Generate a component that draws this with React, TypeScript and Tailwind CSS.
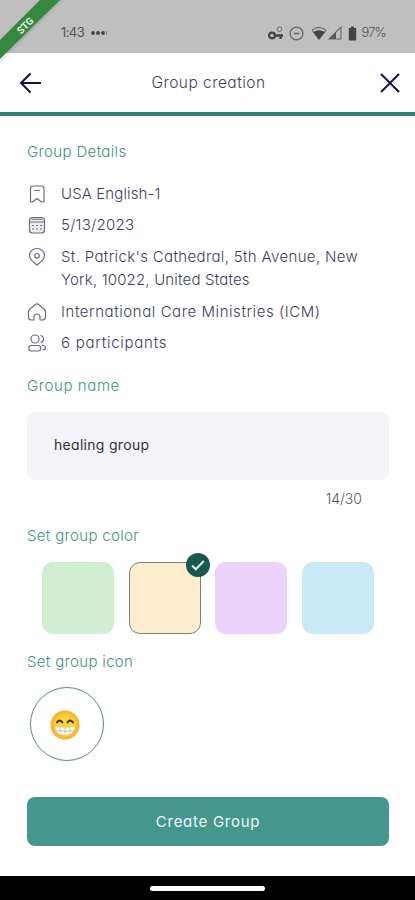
import type { ReactNode } from "react";

type DetailRowProps = {
  icon: ReactNode;
  children: ReactNode;
  className?: string;
};

const SWATCHES = [
  { name: "Green", fill: "bg-[#d0eed2]", selected: false },
  { name: "Yellow", fill: "bg-[#fdedcf]", selected: true },
  { name: "Purple", fill: "bg-[#ebd3fb]", selected: false },
  { name: "Blue", fill: "bg-[#c9ebf8]", selected: false },
];

function StatusBar() {
  return (
    <div className="relative flex h-[53px] shrink-0 items-start justify-between bg-[#bfbfbf] pr-[29px] pl-[61px] pt-[23px] text-[#555]">
      <div className="flex h-5 items-center">
        <span className="text-[13px] tracking-[-0.6px]">1:43</span>
        <svg className="ml-1.5 h-2 w-[18px]" viewBox="0 0 18 8" fill="#444">
          <circle cx="3" cy="4" r="1.9" />
          <circle cx="8" cy="4" r="1.9" />
          <circle cx="13" cy="4" r="1.9" />
          <path d="M16 2h.8v4H16z" opacity=".6" />
        </svg>
      </div>
      <div className="flex h-5 items-center">
        <svg className="h-4 w-4" viewBox="0 0 16 16" fill="none" stroke="#444">
          <circle cx="4" cy="10.5" r="2.9" strokeWidth="2.2" />
          <path d="M7 10.5h8M12.6 10.5V14" strokeWidth="2.4" />
          <circle cx="11.5" cy="4.2" r="2.3" strokeWidth="1" opacity=".7" />
        </svg>
        <svg className="ml-[5px] h-[15px] w-[15px]" viewBox="0 0 15 15" fill="none" stroke="#666">
          <circle cx="7.5" cy="7.5" r="6.4" strokeWidth="1.3" />
          <path d="M4.8 7.5h5.4" strokeWidth="1.6" />
        </svg>
        <svg className="ml-[7px] h-[15px] w-4" viewBox="0 0 16 15">
          <path d="M1 4.2Q8-1.2 15 4.2L8 13.5Z" fill="none" stroke="#555" strokeWidth="1" />
          <path d="M2.4 6Q8 2.6 13.6 6L8 13.5Z" fill="#444" />
        </svg>
        <svg className="ml-px h-[14px] w-[14px]" viewBox="0 0 14 14">
          <path d="M13 1v12H1Z" fill="none" stroke="#666" strokeWidth="1.1" />
          <path d="M8 6v7H1Z" fill="#555" />
        </svg>
        <svg className="ml-[6px] h-[15px] w-[9px]" viewBox="0 0 9 15" fill="#444">
          <path d="M3 .5h3V2h2.2v12.5H.8V2H3Z" />
        </svg>
        <span className="ml-1 text-[13px] font-light tracking-[-0.8px]">97%</span>
      </div>

      {/* corner ribbon */}
      <svg className="absolute top-0 left-0 h-16 w-16" viewBox="0 0 64 64">
        <path d="M40 0H63L0 63V40Z" fill="#000" opacity=".08" />
        <path d="M40 0H60L0 59V40Z" fill="#36883e" />
        <text
          x="25.5"
          y="29"
          textAnchor="middle"
          transform="rotate(-45 25.5 26)"
          fill="#e4f2e5"
          className="font-['Roboto',sans-serif] text-[10px] font-bold"
        >
          STG
        </text>
      </svg>
    </div>
  );
}

function Header() {
  return (
    <header className="flex h-[63px] shrink-0 items-center justify-between border-b-4 border-[#2d8272] pr-[15px] pl-[19px] text-[#14104e]">
      <button type="button" aria-label="Back">
        <svg className="h-[22px] w-[22px]" viewBox="0 0 22 22" fill="none" stroke="currentColor" strokeWidth="2">
          <path d="M22 11H2M11.5 1.5 2 11l9.5 9.5" />
        </svg>
      </button>
      <h1 className="mr-1 text-[15.5px] font-light tracking-[0.46px] text-[#423e60]">Group creation</h1>
      <button type="button" aria-label="Close">
        <svg className="h-5 w-5" viewBox="0 0 20 20" fill="none" stroke="currentColor" strokeWidth="2">
          <path d="m1 1 18 18M19 1 1 19" />
        </svg>
      </button>
    </header>
  );
}

function DetailRow({ icon, children, className = "tracking-normal" }: DetailRowProps) {
  return (
    <li className="flex items-start">
      <svg
        className="mt-0.5 mr-[14px] h-5 w-5 shrink-0"
        viewBox="0 0 20 20"
        fill="none"
        stroke="#6b687c"
        strokeWidth="1.15"
        strokeLinecap="round"
        strokeLinejoin="round"
      >
        {icon}
      </svg>
      <span className={className}>{children}</span>
    </li>
  );
}

function GroupDetails() {
  return (
    <ul className="mt-5 flex flex-col gap-2 text-[15px] leading-[23.4px] font-light text-[#423e60]">
      <DetailRow
        className="tracking-[0.12px]"
        icon={<path d="M5.5 2h9Q17 2 17 4.5V18h-2.5L10 14.5 5.5 18H3.5V4.5Q3.5 2 5.5 2ZM7.5 6.5h5" />}
      >
        USA English-1
      </DetailRow>
      <DetailRow
        className="tracking-[0.25px]"
        icon={
          <>
            <rect x="2.5" y="2.5" width="15" height="15.5" rx="3" fill="#ececf0" />
            <path d="M2.5 7h15M5 4.2h10" />
            <path d="M5.5 10.5h1M9.5 10.5h1M13.5 10.5h1M5.5 14h1M9.5 14h1M13.5 14h1" />
          </>
        }
      >
        5/13/2023
      </DetailRow>
      <DetailRow
        className="tracking-[0.35px]"
        icon={
          <>
            <path d="M10 18Q2.5 12.5 2.5 8.5a7.5 7 0 0 1 15 0Q17.5 12.5 10 18Z" />
            <circle cx="10" cy="8.8" r="2.3" />
          </>
        }
      >
        St. Patrick's Cathedral, 5th Avenue, New
        <br />
        <span className="tracking-[0.17px]">York, 10022, United States</span>
      </DetailRow>
      <DetailRow
        className="tracking-[0.57px]"
        icon={
          <path d="M7 18H4.5Q1.5 18 1.5 15V10Q1.5 8.3 3 7L8 2.7Q10 1.2 12 2.7L17 7Q18.5 8.3 18.5 10v5q0 3-3 3H13V15a3 3 0 0 0-6 0Z" />
        }
      >
        International Care Ministries (ICM)
      </DetailRow>
      <DetailRow
        className="tracking-[0.75px]"
        icon={
          <>
            <circle cx="8" cy="6" r="4" />
            <rect x="1.8" y="12.5" width="12" height="5.5" rx="2.75" />
            <path d="M14 2.5a3.7 3.7 0 0 1 0 7M15 12q3.5.6 3.5 2.7 0 1.8-2.5 2.3" />
          </>
        }
      >
        6 participants
      </DetailRow>
    </ul>
  );
}

function ColorPicker() {
  return (
    <div className="mt-4 flex gap-[14.7px] pl-[15px]">
      {SWATCHES.map((swatch) => (
        <button
          key={swatch.name}
          type="button"
          aria-label={swatch.name}
          className={`relative h-[72px] w-[72px] rounded-[11px] ${swatch.fill} ${
            swatch.selected ? "border border-[#6d8a78]" : ""
          }`}
        >
          {swatch.selected && (
            <svg className="absolute -top-[10px] -right-[10px] h-6 w-6" viewBox="0 0 24 24">
              <circle cx="12" cy="12" r="12" fill="#17584f" />
              <path d="m6 12.5 3.8 3.8 8-8.3" fill="none" stroke="#e4f5ef" strokeWidth="2" />
            </svg>
          )}
        </button>
      ))}
    </div>
  );
}

function GrinEmoji() {
  return (
    <svg className="mr-1 mt-px h-[30px] w-[30px]" viewBox="0 0 30 30">
      <defs>
        <radialGradient id="face">
          <stop offset="0.55" stopColor="#ffd43c" />
          <stop offset="1" stopColor="#f9ae25" />
        </radialGradient>
      </defs>
      <circle cx="15" cy="15" r="14.5" fill="url(#face)" />
      <path
        d="M7 12.5q2.5-4 5.5 0M17.5 12.5q2.5-4 5.5 0"
        fill="none"
        stroke="#4b3514"
        strokeWidth="2"
        strokeLinecap="round"
      />
      <path d="M6 16.5Q15 19 24 16.5q1.2 0 .8 2Q23 25 15 25T5.2 18.5Q5 16.5 6 16.5Z" fill="#fff" />
      <path
        d="M5.8 20.5Q15 22.5 24.2 20.5M10 17.5v6M15 18v7M20 17.5v6"
        fill="none"
        stroke="#a9a9b5"
        strokeWidth=".7"
      />
    </svg>
  );
}

export default function App() {
  return (
    <div className="flex h-[900px] w-[415px] flex-col overflow-hidden bg-white font-['Inter',sans-serif] [font-feature-settings:'cv11']">
      <StatusBar />
      <Header />

      <main className="flex flex-1 flex-col pr-[26px] pl-[27px] text-[15px] font-light text-[#41967f]">
        <h2 className="mt-[26px] leading-5 tracking-[0.36px]">Group Details</h2>
        <GroupDetails />

        <h2 className="mt-[22px] leading-5 tracking-[0.6px]">Group name</h2>
        <div className="mt-4 flex h-[68px] items-center rounded-lg bg-[#f5f4f9] pl-[27px] text-[14px] font-normal tracking-[0.3px] text-[#333]">
          <span className="-mt-1">healing group</span>
        </div>
        <p className="mt-[9px] pr-[27px] text-right text-[14px] leading-5 text-[#555]">14/30</p>

        <h2 className="mt-[17px] leading-5 tracking-[0.33px]">Set group color</h2>
        <ColorPicker />

        <h2 className="mt-[18px] leading-5 tracking-[0.33px]">Set group icon</h2>
        <button
          type="button"
          aria-label="Group icon"
          className="mt-[15px] ml-[3px] flex h-[74px] w-[74px] items-center justify-center rounded-full border border-[#5e8980]"
        >
          <GrinEmoji />
        </button>

        <button
          type="button"
          className="mt-9 h-[49px] rounded-lg bg-[#45968d] text-[15px] font-normal tracking-[0.72px] text-[#ecfaf7]"
        >
          Create Group
        </button>
      </main>

      <div className="flex h-6 shrink-0 items-center justify-center bg-black">
        <div className="h-[5px] w-[115px] rounded-full bg-white" />
      </div>
    </div>
  );
}
